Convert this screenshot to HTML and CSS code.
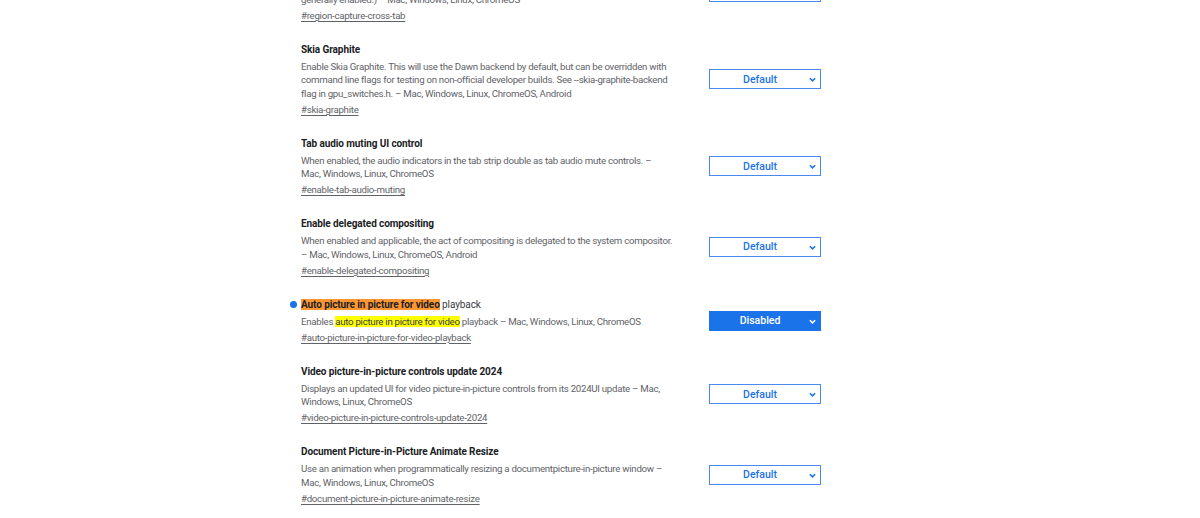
FILE: index.html
```html
<!DOCTYPE html>
<html>
<head>
<meta charset="utf-8">
<link rel="stylesheet" href="styles.css">
</head>
<body>
<div class="flags">
  <div class="experiment">
    <div class="text">
      <h3 class="name">Region Capture cross-tab</h3>
      <p class="desc">Enables Region Capture of other tabs (only relevant for tab capture; Region Capture is<br>generally enabled.) – Mac, Windows, Linux, ChromeOS</p>
      <a class="link">#region-capture-cross-tab</a>
    </div>
    <div class="select"><span>Default</span><svg class="chev" viewBox="0 0 8 5"><path d="M1 1l3 3 3-3"/></svg></div>
  </div>

  <div class="experiment">
    <div class="text">
      <h3 class="name">Skia Graphite</h3>
      <p class="desc">Enable Skia Graphite. This will use the Dawn backend by default, but can be overridden with<br>command line flags for testing on non-official developer builds. See --skia-graphite-backend<br>flag in gpu_switches.h. – Mac, Windows, Linux, ChromeOS, Android</p>
      <a class="link">#skia-graphite</a>
    </div>
    <div class="select"><span>Default</span><svg class="chev" viewBox="0 0 8 5"><path d="M1 1l3 3 3-3"/></svg></div>
  </div>

  <div class="experiment">
    <div class="text">
      <h3 class="name">Tab audio muting UI control</h3>
      <p class="desc">When enabled, the audio indicators in the tab strip double as tab audio mute controls. –<br>Mac, Windows, Linux, ChromeOS</p>
      <a class="link">#enable-tab-audio-muting</a>
    </div>
    <div class="select"><span>Default</span><svg class="chev" viewBox="0 0 8 5"><path d="M1 1l3 3 3-3"/></svg></div>
  </div>

  <div class="experiment">
    <div class="text">
      <h3 class="name">Enable delegated compositing</h3>
      <p class="desc">When enabled and applicable, the act of compositing is delegated to the system compositor.<br>– Mac, Windows, Linux, ChromeOS, Android</p>
      <a class="link">#enable-delegated-compositing</a>
    </div>
    <div class="select"><span>Default</span><svg class="chev" viewBox="0 0 8 5"><path d="M1 1l3 3 3-3"/></svg></div>
  </div>

  <div class="experiment modified">
    <span class="dot"></span>
    <div class="text">
      <h3 class="name"><mark class="hl-active">Auto picture in picture for video</mark> <span class="plain">playback</span></h3>
      <p class="desc">Enables <mark class="hl">auto picture in picture for video</mark> playback – Mac, Windows, Linux, ChromeOS</p>
      <a class="link">#auto-picture-in-picture-for-video-playback</a>
    </div>
    <div class="select selected"><span>Disabled</span><svg class="chev" viewBox="0 0 8 5"><path d="M1 1l3 3 3-3"/></svg></div>
  </div>

  <div class="experiment">
    <div class="text">
      <h3 class="name">Video picture-in-picture controls update 2024</h3>
      <p class="desc">Displays an updated UI for video picture-in-picture controls from its 2024UI update – Mac,<br>Windows, Linux, ChromeOS</p>
      <a class="link">#video-picture-in-picture-controls-update-2024</a>
    </div>
    <div class="select"><span>Default</span><svg class="chev" viewBox="0 0 8 5"><path d="M1 1l3 3 3-3"/></svg></div>
  </div>

  <div class="experiment">
    <div class="text">
      <h3 class="name">Document Picture-in-Picture Animate Resize</h3>
      <p class="desc">Use an animation when programmatically resizing a documentpicture-in-picture window –<br>Mac, Windows, Linux, ChromeOS</p>
      <a class="link">#document-picture-in-picture-animate-resize</a>
    </div>
    <div class="select"><span>Default</span><svg class="chev" viewBox="0 0 8 5"><path d="M1 1l3 3 3-3"/></svg></div>
  </div>
</div>
</body>
</html>
```

FILE: styles.css
```css
html, body {
  margin: 0;
  padding: 0;
  background: #ffffff;
  overflow: hidden;
}

body {
  font-family: Roboto, "Liberation Sans", Arial, sans-serif;
  font-size: 9.7px;
  letter-spacing: -0.28px;
  font-variant-ligatures: none;
  color: #5f6368;
}

.flags {
  margin-top: -39px;
  padding-left: 301px;
}

.experiment {
  position: relative;
  display: flex;
  align-items: center;
  width: 520px;
  padding-bottom: 19px;
}

.text {
  width: 408px;
  flex: none;
  display: flex;
  flex-direction: column;
  align-items: flex-start;
}

.name {
  margin: 0;
  font-size: 10px;
  font-weight: bold;
  line-height: 16px;
  color: #202124;
  white-space: nowrap;
  letter-spacing: -0.1px;
}

.name .plain {
  font-weight: normal;
  color: #3c4043;
}

.desc {
  margin: 2px 0 0;
  line-height: 13.5px;
  white-space: nowrap;
}

.link {
  margin-top: 2.5px;
  line-height: 14px;
  color: #5f6368;
  text-decoration: underline;
  text-underline-offset: 1.5px;
}

mark {
  color: inherit;
}

.hl-active {
  background: #ff9632;
  color: #202124;
}

.hl {
  background: #ffff00;
  color: #3c4043;
}

.dot {
  position: absolute;
  left: -11px;
  top: 4px;
  width: 7px;
  height: 7px;
  border-radius: 50%;
  background: #1a73e8;
}

.select {
  box-sizing: border-box;
  width: 112px;
  height: 20px;
  border: 1px solid #4a8af0;
  display: flex;
  align-items: center;
  justify-content: center;
  position: relative;
  color: #1a73e8;
  font-size: 10.5px;
  font-weight: 500;
  letter-spacing: 0;
  padding-right: 10px;
}

.select.selected {
  background: #1a73e8;
  border-color: #1a73e8;
  color: #ffffff;
}

.chev {
  position: absolute;
  right: 4px;
  top: 7px;
  width: 7px;
  height: 5px;
  fill: none;
  stroke: currentColor;
  stroke-width: 1.8;
}
```
